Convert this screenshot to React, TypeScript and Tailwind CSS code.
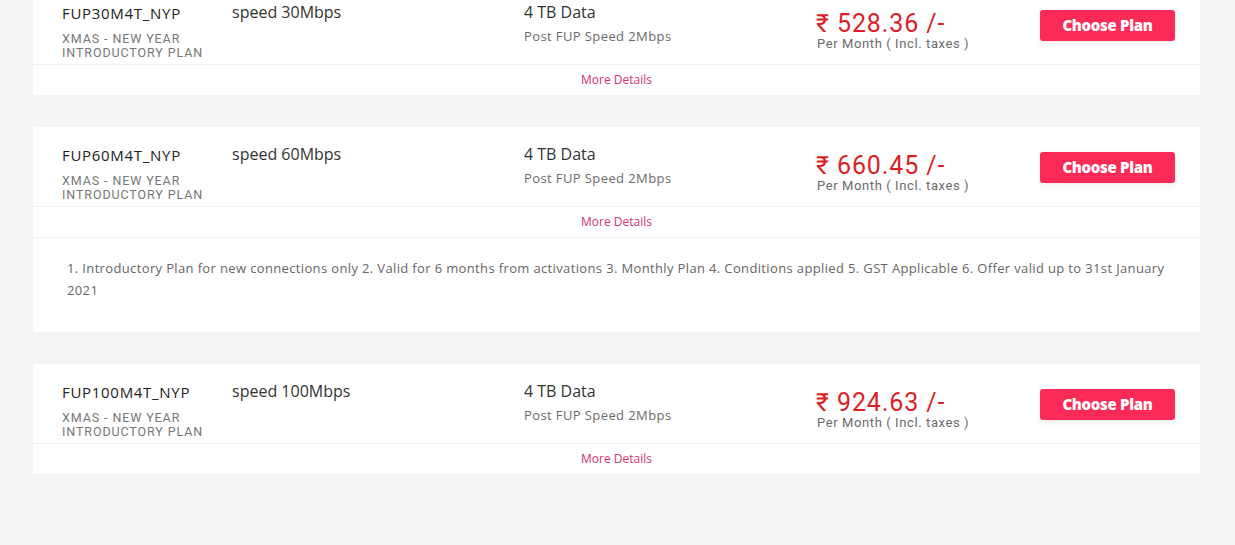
const plans = [
  { code: 'FUP30M4T_NYP', speed: 'speed 30Mbps', price: '528.36', open: false },
  { code: 'FUP60M4T_NYP', speed: 'speed 60Mbps', price: '660.45', open: true },
  { code: 'FUP100M4T_NYP', speed: 'speed 100Mbps', price: '924.63', open: false },
]

const terms =
  '1. Introductory Plan for new connections only 2. Valid for 6 months from activations 3. Monthly Plan 4. Conditions applied 5. GST Applicable 6. Offer valid up to 31st January 2021'

function PlanCard({ plan, first }: { plan: (typeof plans)[number]; first: boolean }) {
  return (
    <div className={`w-[1167px] bg-white ${first ? '-mt-[15px]' : ''}`}>
      {/* Main row */}
      <div className="flex h-[80px] pl-[29px] border-b border-[#f0f0f0]">
        <div className="w-[170px] pt-[18px]">
          <div className="text-[15px] leading-5 text-[#222] font-['Open_Sans',sans-serif] tracking-[0.7px]">
            {plan.code}
          </div>
          <div className="mt-[9px] text-[12.5px] leading-[14px] text-[#777] uppercase tracking-[0.9px] font-['Roboto',sans-serif]">
            XMAS - NEW YEAR
            <br />
            INTRODUCTORY PLAN
          </div>
        </div>
        <div className="w-[292px] pt-[17px] text-[16px] leading-5 text-[#333] font-['Open_Sans',sans-serif]">
          {plan.speed}
        </div>
        <div className="w-[292px] pt-[17px] font-['Open_Sans',sans-serif]">
          <div className="text-[16px] leading-5 text-[#333]">4 TB Data</div>
          <div className="mt-[6px] text-[13px] leading-4 text-[#6b6b6b] tracking-[0.4px]">Post FUP Speed 2Mbps</div>
        </div>
        <div className="w-[224px] pt-[25px]">
          <div className="text-[25px] leading-7 text-[#dc1f26] font-['Roboto',sans-serif] tracking-[0.9px]">
            ₹ {plan.price} /-
          </div>
          <div className="-mt-[2px] pl-[1px] text-[13px] leading-4 text-[#6b6b6b] tracking-[0.6px] font-['Roboto',sans-serif]">
            Per Month ( Incl. taxes )
          </div>
        </div>
        <div className="pt-[25px]">
          <button className="w-[135px] h-[31px] rounded-[3px] bg-[#fc2a56] text-white text-[15px] font-extrabold font-['Open_Sans',sans-serif] tracking-[-0.3px] shadow-[0_2px_6px_rgba(0,0,0,0.08)]">
            Choose Plan
          </button>
        </div>
      </div>

      {/* More details toggle */}
      <div className="h-[30px] flex items-center justify-center text-[12px] text-[#d6336c] font-['Open_Sans',sans-serif]">
        More Details
      </div>

      {plan.open && (
        <div className="border-t border-[#f0f0f0] pl-[34px] pr-[34px] pt-[19px] pb-[31px] text-[13px] leading-[22px] text-[#666] tracking-[0.36px] font-['Open_Sans',sans-serif]">
          {terms}
        </div>
      )}
    </div>
  )
}

export default function App() {
  return (
    <div className="w-[1235px] h-[545px] overflow-hidden bg-[#f5f5f5]">
      <div className="ml-[33px] flex flex-col gap-[32px]">
        {plans.map((p, i) => (
          <PlanCard key={p.code} plan={p} first={i === 0} />
        ))}
      </div>
    </div>
  )
}
